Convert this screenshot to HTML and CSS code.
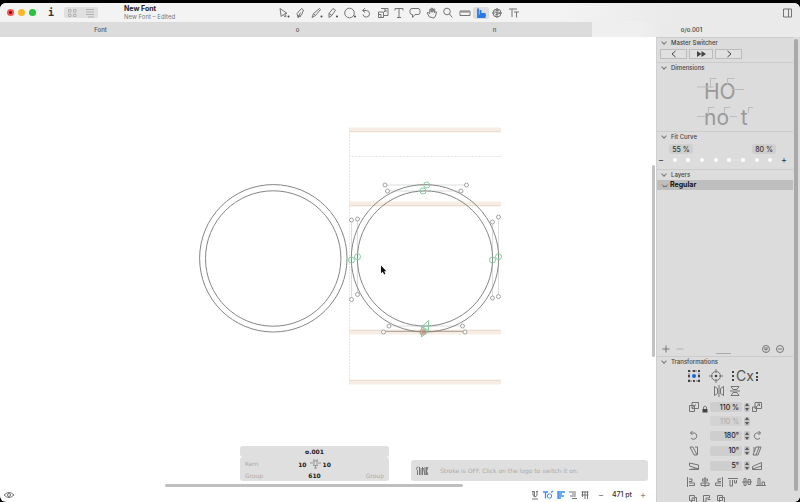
FILE: index.html
```html
<!DOCTYPE html>
<html lang="en">
<head>
<meta charset="utf-8">
<title>New Font</title>
<link rel="stylesheet" href="styles.css">
</head>
<body>
<div class="window">
  <header class="titlebar">
    <div class="lights"><i class="light close"></i><i class="light minimise"></i><i class="light full"></i></div>
    <button class="info" aria-label="Info">i</button>
    <div class="views">
      <button aria-label="Grid view"><svg width="12" height="10"><path d="M1.500 1.500h2.500v2.500h-2.500zM6.500 1.500h2.500v2.500h-2.500zM1.500 6h2.500v2.500h-2.500zM6.500 6h2.500v2.500h-2.500z"/></svg></button>
      <button aria-label="List view"><svg width="12" height="10"><path d="M2 1.500h8M2 4h8M2 6.500h8M4 9h6"/></svg></button>
    </div>
    <div class="title"><h1>New Font</h1><p>New Font – Edited</p></div>
    <nav class="tools" aria-label="Tools">
      <button aria-label="Select"><svg viewBox="0 0 14 12"><path d="M3 1.500l1.200 8 2-2 1.800 2.500 1.200-.8-1.700-2.400 2.500-.4z"/><circle class="dot" cx="11.500" cy="9.500" r="1"/></svg></button>
      <button aria-label="Draw"><svg viewBox="0 0 14 12"><path d="M5 10.500l-1-4 4.500-5 2 1.500-2 5zM5 10.500l2.500-5M4.500 8.500l3.500 1"/></svg></button>
      <button aria-label="Pencil"><svg viewBox="0 0 14 12"><path d="M2 10.500l1.500-4 6-5 1 1-5 6zM3.500 6.500l2 2"/><circle class="dot" cx="11.500" cy="9.500" r="1"/></svg></button>
      <button aria-label="Brush"><svg viewBox="0 0 14 12"><path d="M3 10.500v-4l4-5 2.500 1.800-3.500 5zM3 6.500l3 2"/><circle class="dot" cx="11" cy="9.500" r="1"/></svg></button>
      <button aria-label="Ellipse"><svg viewBox="0 0 14 12"><circle cx="6.500" cy="6" r="4.800"/><circle class="dot" cx="12" cy="9.500" r="1"/></svg></button>
      <button aria-label="Rotate"><svg viewBox="0 0 14 12"><path d="M4 3.500h3.500a3.300 3.300 0 1 1-3.500 4M6 1.200l-2.500 2.300 2.500 2"/></svg></button>
      <button aria-label="Scale"><svg viewBox="0 0 14 12"><path d="M5 1.500h7v7h-4M2.500 5h5v5.500h-5zM7 6l3-3M8 3h2v2M2.500 7.500h2.500v3"/></svg></button>
      <button aria-label="Text"><svg viewBox="0 0 14 12"><path d="M3 3.500v-2h8v2M7 1.500v9M5 10.500h4"/></svg></button>
      <button aria-label="Annotate"><svg viewBox="0 0 14 12"><path d="M4 1.500h6q2 0 2 2v2q0 2-2 2h-3l-2.500 3v-3q-2.500 0-2.500-2v-2q0-2 2-2z"/></svg></button>
      <button aria-label="Hand"><svg viewBox="0 0 14 12"><path d="M4.500 10l-2.500-4 1-.8 1.700 1.700v-4.500l1-.2.600 3v-4h1.200l.300 4 1-3.400 1 .4-.4 3.800 1.300-1.500.8.5-1 4-1.500 2z"/></svg></button>
      <button aria-label="Zoom"><svg viewBox="0 0 14 12"><circle cx="6" cy="4.500" r="3.300"/><path d="M8.300 6.800l3 3.700"/></svg></button>
      <button aria-label="Measure"><svg viewBox="0 0 14 12"><path d="M2 4h10v4.500h-10zM4 4v2M6 4v2M8 4v2M10 4v2"/></svg></button>
      <button class="on" aria-label="Fit curve"><svg viewBox="0 0 14 12"><path d="M4 1.500v8.500h7.500M6.500 3v4h5M5 8.500h7" stroke-width="1.800"/></svg></button>
      <button aria-label="Spacing"><svg viewBox="0 0 14 12"><circle cx="7" cy="6" r="4"/><path d="M9 4q-4-1.500-4 .5t4 1.500-4 2M7 1v10M2 6h3M9 6h3"/></svg></button>
      <button aria-label="Compare"><svg viewBox="0 0 14 12"><path d="M2 2h8M5 2v8M7 5h5M9.500 5v5.500"/></svg></button>
    </nav>
    <button class="panel-toggle" aria-label="Toggle sidebar"><svg width="12" height="12"><path d="M2.500 2h8v8h-8zM7.500 2v8"/></svg></button>
  </header>
  <nav class="tabs">
    <a href="#">Font</a><a href="#">o</a><a href="#">n</a><a href="#" class="active">o/o.001</a>
  </nav>
  <div class="body">
    <main class="editor">
      <div class="canvas">
        <svg class="drawing" aria-label="Glyph outlines"><g transform="translate(0 -37)">
          <g class="zones"><path d="M349 130h152M349 204h152M349 332h152M349 382h152"/></g>
          <path class="zone-line" d="M349 131.500h152M349 205.500h152M349 330.500h152M349 380.500h152"/>
          <path class="guide" d="M349.500 128v256M349 156.500h152"/>
          <path class="handle-line" d="M385 185h82M387 191h74M351.500 220v80M357.500 219v76M492.500 222v76M498.500 217v79M389 326h74"/>
          <path class="base" d="M383.500 331.500h82"/>
          <g class="outline">
            <circle cx="273.300" cy="258.300" r="73.700"/><circle cx="273.200" cy="258.500" r="67.700"/>
            <circle cx="425" cy="258.300" r="73.700"/><circle cx="425" cy="258.500" r="67.600"/>
          </g>
          <g class="handle">
            <circle cx="385" cy="185" r="2"/><circle cx="466.500" cy="185" r="2"/><circle cx="387.500" cy="191" r="2"/><circle cx="461" cy="191" r="2"/>
            <circle cx="351.500" cy="220" r="2"/><circle cx="357.500" cy="219" r="2"/><circle cx="492.500" cy="222" r="2"/><circle cx="498.500" cy="217" r="2"/>
            <circle cx="351.500" cy="299.500" r="2"/><circle cx="357.500" cy="294.500" r="2"/><circle cx="492.500" cy="298" r="2"/><circle cx="498.500" cy="296.500" r="2"/>
            <circle cx="389" cy="326" r="2"/><circle cx="462.500" cy="326" r="2"/><circle cx="383.500" cy="332" r="2"/><circle cx="465" cy="332" r="2"/>
          </g>
          <circle class="start" cx="423" cy="332" r="3.500"/>
          <g class="node">
            <circle cx="426.700" cy="185" r="3"/><circle cx="423" cy="191" r="3"/>
            <circle cx="351.500" cy="260" r="3"/><circle cx="357.500" cy="256.700" r="3"/>
            <circle cx="492.500" cy="260" r="3"/><circle cx="498.500" cy="256.700" r="3"/>
            <path d="M428.500 320.500v10l-6.500-4zM421.500 326.500l6 5.500-6 5z"/>
          </g>
          <path class="cursor" d="M381 265.500v7.800l1.800-1.500 1.300 2.700 1.300-.7-1.300-2.600h2.300z"/>
        </g></svg>
        <section class="metrics">
          <div class="name">o.001</div>
          <div class="pairs">
            <span>Kern</span>
            <b class="bearings">10 <svg width="12" height="12"><path d="M5 1v6M8 1v6M1 5h3M9 5h3M4 7.500h5M6.500 7.500v3M5 10h3M4 3h5"/></svg> 10</b>
            <span></span>
            <span>Group</span><b>610</b><span class="right">Group</span>
          </div>
        </section>
        <section class="notice">
          <svg width="14" height="10"><path d="M3.500 1q-2 0-2 1.500t1 2v4.500M4.500 1v8M6 2v7M7.500 1v8M8.500 2l1.500 7v-8M11.500 1v8M13 1l-1.500 4 1.500 4"/></svg>
          <span>Stroke is OFF. Click on the logo to switch it on.</span>
        </section>
        <i class="vscroll"></i><i class="hscroll"></i>
      </div>
      <footer class="status">
        <button aria-label="Preview"><svg width="12" height="8"><path d="M1 4q5-5 10 0q-5 5-10 0z"/><circle cx="6" cy="4" r="1.500"/></svg></button>
        <div class="status-tools">
          <button aria-label="Underline"><svg width="10" height="10"><path d="M2 1.500h2.500M6 1.500h2M3 1.500v4q2 3 4 0v-4M2 9h6M4.500 1.500v5"/></svg></button>
          <button class="blue" aria-label="Kerning"><svg width="12" height="10"><path d="M1 2h5M3.500 2v6.500M9 2.500l2-1.500" stroke-width="1.300"/><circle cx="7.500" cy="6" r="2.200"/></svg></button>
          <button class="blue" aria-label="Align left"><svg width="10" height="10"><path d="M2 1v8M2 2h7M2 4h4M2 6h6M2 8h3" stroke-width="1.300"/></svg></button>
          <button aria-label="Align right"><svg width="10" height="10"><path d="M1 2h7M4 4h4M2 6h6M4 8.500h5"/></svg></button>
          <button aria-label="Vertical"><svg width="10" height="10"><path d="M2.500 1v6M5 1v8M7.500 1v8M1.500 2h7M1.500 5h7"/></svg></button>
        </div>
        <div class="zoom"><button aria-label="Zoom out">−</button><span>471 pt</span><button aria-label="Zoom in">+</button></div>
      </footer>
    </main>
    <aside class="sidebar">
      <div class="panels">
        <section class="master">
          <h2>Master Switcher</h2>
          <div class="switcher">
            <button aria-label="Previous"><svg width="8" height="8"><path d="M5.500 1l-3.500 3 3.500 3"/></svg></button>
            <button aria-label="Play"><svg width="11" height="8"><path class="solid" d="M1 1l4.500 3-4.500 3zM5.500 1l4.500 3-4.500 3z"/></svg></button>
            <button aria-label="Next"><svg width="8" height="8"><path d="M2.500 1l3.500 3-3.500 3"/></svg></button>
          </div>
        </section>
        <section class="dims">
          <h2>Dimensions</h2>
          <div class="specimen">
            <div>HO</div><div>no&nbsp;&nbsp;t</div>
            <svg class="ticks" viewBox="0 0 56 56"><path d="M0 14h17M13.500 5v10M13.500 5.500h6M30.500 5v7M30.500 5.500h7M35 16.500h12M0 43.500h9M11.500 34v6M11.500 34.500h6M27.500 34v6M27.500 34.500h6M33 43.500h7M51.500 34v6M51.500 34.500h5"/></svg>
          </div>
        </section>
        <section class="fit">
          <h2>Fit Curve</h2>
          <div class="range"><input aria-label="Minimum" value="55 %"><input aria-label="Maximum" value="80 %"></div>
          <div class="dots"><b>−</b><i></i><i></i><i></i><i></i><i></i><i></i><i></i><i></i><b>+</b></div>
        </section>
        <section class="layers">
          <h2>Layers</h2>
          <div class="layer"><svg width="8" height="6"><path d="M1 2.500q3 4 6 0M2 4.500h4"/></svg>Regular</div>
          <div class="layer-tools">
            <button aria-label="Add layer"><svg width="10" height="10"><path d="M1.500 5h7M5 1.500v7"/></svg></button>
            <button class="faint" aria-label="Remove layer"><svg width="10" height="10"><path d="M1.500 5h7"/></svg></button>
            <i class="grip"></i>
            <button aria-label="Filter"><svg width="10" height="10"><circle cx="5" cy="5" r="3.500"/><path d="M3 4h4M3.500 5.500h3M4.500 7h1"/></svg></button>
            <button aria-label="More"><svg width="10" height="10"><circle cx="5" cy="5" r="3.500"/><path d="M3 5h4"/></svg></button>
          </div>
        </section>
        <section class="transform">
          <h2>Transformations</h2>
          <div class="origin">
            <button aria-label="Origin"><svg width="14" height="14"><path d="M2 2h10v10h-10z" stroke-dasharray="2 1"/><path class="solid" d="M1 1h2v2h-2zM6 1h2v2h-2zM11 1h2v2h-2zM1 6h2v2h-2zM11 6h2v2h-2zM1 11h2v2h-2zM6 11h2v2h-2zM11 11h2v2h-2z"/><circle class="centre" cx="7" cy="7" r="2"/></svg></button>
            <button aria-label="Target"><svg width="14" height="14"><circle cx="7" cy="7" r="4.500"/><circle class="solid" cx="7" cy="7" r="1.300"/><path d="M7 0v4M7 10v4M0 7h4M10 7h4"/></svg></button>
            <button class="metric" aria-label="Metrics reference"><svg width="4" height="14"><path class="solid" d="M1 2h2v2h-2zM1 6h2v2h-2zM1 10h2v2h-2z"/></svg><span>Cx</span><svg width="4" height="14"><path class="solid" d="M1 3h2v2h-2zM1 7h2v2h-2zM1 10h2v2h-2z"/></svg></button>
          </div>
          <div class="flips">
            <button aria-label="Flip horizontally"><svg width="12" height="12"><path d="M1.500 1.500l3 2v5l-3 2zM10.500 1.500l-3 2v5l3 2zM6 0v12"/></svg></button>
            <button aria-label="Flip vertically"><svg width="12" height="12"><path d="M2 1.500h8l-2 3h-4zM2 10.500h8l-2-3h-4zM1 6h10"/></svg></button>
          </div>
          <div class="fields">
            <button aria-label="Scale down"><svg width="12" height="12"><path d="M4 1.500h6.500v6h-6.500zM1.500 4.500h5v6h-5zM4 7l4-3.500"/></svg></button><svg class="lock" width="8" height="10"><path d="M2.500 5v-2q1.500-2 3 0v2"/><path class="solid" d="M1.500 5h5v3.500h-5z"/></svg><input aria-label="Scale" value="110 %"><button class="step" aria-label="Step scale"></button><button aria-label="Scale up"><svg width="12" height="12"><path d="M4 1.500h6.500v6h-6.500zM1.500 6h4v4.500h-4zM5 6l3.500-3M6.500 3h2v2"/></svg></button>
            <input class="off" aria-label="Scale vertically" value="110 %"><button class="step" aria-label="Step vertical scale"></button>
            <button class="first" aria-label="Rotate left"><svg width="12" height="12"><path d="M2.500 3h4a3.200 3.200 0 1 1-3.500 5M4.500 1l-2 2 2 2"/></svg></button><input aria-label="Rotation" value="180°"><button class="step" aria-label="Step rotation"></button><button aria-label="Rotate right"><svg width="12" height="12"><path d="M9.500 3h-4a3.200 3.200 0 1 0 3.500 5M7.500 1l2 2-2 2"/></svg></button>
            <button class="first" aria-label="Slant left"><svg width="12" height="12"><path d="M2 2h3l4 8h-3zM9.500 2v8M7 2h2.500"/></svg></button><input aria-label="Slant" value="10°"><button class="step" aria-label="Step slant"></button><button aria-label="Slant right"><svg width="12" height="12"><path d="M5 2h5l-3 8h-5zM3 2v5M5 10l3-8"/></svg></button>
            <button class="first" aria-label="Skew down"><svg width="12" height="12"><path d="M1.500 3l9 2v4.500h-9l9-1M1.500 3v3l9 3"/></svg></button><input aria-label="Skew" value="5°"><button class="step" aria-label="Step skew"></button><button aria-label="Skew up"><svg width="12" height="12"><path d="M10.500 2.500l-9 4v3h9zM1.500 9l9-3"/></svg></button>
          </div>
          <div class="align">
            <button aria-label="Align left"><svg width="10" height="10"><path d="M1.500 0v10M3 2h3v2.500h-3M3 6h5.500v2.500h-5.500"/></svg></button>
            <button aria-label="Align centre"><svg width="10" height="10"><path d="M5 0v10M2.500 2h5v2h-5zM1 6h8v2.500h-8z"/></svg></button>
            <button aria-label="Align right"><svg width="10" height="10"><path d="M8.500 0v10M7 2h-3v2.500h3M7 6h-5.500v2.500h5.500"/></svg></button>
            <button aria-label="Align top"><svg width="10" height="10"><path d="M0 1.500h10M2 3v6h2.500v-6M6.500 3v3h2v-3"/></svg></button>
            <button aria-label="Align middle"><svg width="10" height="10"><path d="M0 5h10M2 1.500h2v7h-2zM6 2.500h2.500v5h-2.500z"/></svg></button>
            <button aria-label="Align bottom"><svg width="10" height="10"><path d="M0 8.500h10M2 8v-6.500h2v6.500M6 8v-3h2.500v3"/></svg></button>
          </div>
          <div class="paths">
            <button aria-label="Union"><svg width="10" height="10"><path d="M1.500 1.500h5v2h2v5h-5v-2h-2zM4 4h2.500v2.500h-2.500z"/></svg></button>
            <button aria-label="Subtract"><svg width="10" height="10"><path d="M1.500 1.500h6v2.500h-3.500v4h-2.500zM5.500 5.500h3"/></svg></button>
            <button aria-label="Intersect"><svg width="10" height="10"><path d="M1.500 1.500h5v5h-5zM3.500 3.500h5v5h-5z"/></svg></button>
          </div>
        </section>
      </div>
      <i class="side-scroll"></i>
    </aside>
  </div>
</div>
</body>
</html>
```
FILE: styles.css
```css
* { box-sizing: border-box; margin: 0; padding: 0; }
body { background: #000; font: 6px/8px Inter, "Liberation Sans", sans-serif; color: #333; }
button, input { border: 0; background: none; font: inherit; color: inherit; }
button { display: flex; align-items: center; justify-content: center; }
svg { display: block; flex: none; fill: none; stroke: #757575; stroke-width: 1; }
svg .solid, svg .dot { fill: #444; stroke: none; }
a { color: inherit; text-decoration: none; }

.window { display: flex; flex-direction: column; height: calc(100vh - 3px); margin-top: 3px; background: #fff; border-radius: 6px; overflow: hidden; }

.titlebar { display: flex; align-items: center; flex: none; height: 19px; padding: 0 7px; background: linear-gradient(90deg, #f3f3f3 70%, #eaeaea 84%); }
.lights { display: flex; gap: 4px; width: 39px; }
.light { width: 7px; height: 7px; border-radius: 50%; }
.close { background: radial-gradient(circle, #7b1010 1px, #fb504b 2px); }
.minimise { background: #fcb827; }
.full { background: #25c43c; }
.info { width: 10px; font: bold 10px/12px "DejaVu Sans Mono", monospace; }
.views { display: flex; justify-content: space-around; width: 34px; height: 11px; margin-left: 8px; background: #e0e0e0; border-radius: 2px; }
.views svg { stroke: #b2b2b2; }
.title { width: 152px; margin-left: 26px; }
.title h1 { font-size: 7px; line-height: 8px; color: #222; }
.title p { font-size: 6px; line-height: 7px; color: #777; }
.tools { display: flex; justify-content: space-between; width: 246px; }
.tools button { width: 16px; height: 12px; border-radius: 2px; }
.tools svg { width: 14px; height: 12px; }
.tools .on { background: #dedede; }
.tools .on svg { stroke: #2878e8; }
.panel-toggle { margin-left: auto; }

.tabs { display: grid; grid-template-columns: repeat(4, 1fr); flex: none; height: 15px; padding: 0 10px 0 2px; background: linear-gradient(90deg, #dcdcdc 74%, #efefef 74%, #efefef 80%, #eaeaea 83%); font-weight: 500; line-height: 15px; text-align: center; color: #555; }
.tabs .active { color: #333; }

.body { display: flex; flex: 1; min-height: 0; }
.editor { display: flex; flex: 1; flex-direction: column; min-width: 0; }
.canvas { position: relative; flex: 1; overflow: hidden; }
.drawing { position: absolute; width: 100%; height: 100%; }
.zones { stroke: #f6ede5; stroke-width: 5; }
.zone-line { stroke: #ebdccf; }
.guide { stroke: #e6e6e6; stroke-dasharray: 2 1; }
.handle-line { stroke: #dadfdc; }
.base { stroke: #b5a89c; }
.outline { stroke: #858585; }
.handle { fill: #fff; stroke: #a2a2a2; }
.node { stroke: #84cda2; }
.start { fill: #b38469; stroke: none; opacity: .6; }
.cursor { fill: #111; stroke: none; }

.metrics { position: absolute; bottom: 7px; left: 240px; width: 149px; color: #222; font-family: "DejaVu Sans", sans-serif; }
.metrics > div { background: #dfdfdf; border-radius: 3px; }
.name { padding: 2px 0 1px; font-weight: bold; text-align: center; }
.pairs { display: grid; grid-template-columns: 1fr auto 1fr; padding: 1px 5px 0; line-height: 11px; text-align: center; }
.pairs span { color: #aaa; text-align: left; }
.pairs .right { text-align: right; }
.bearings { display: flex; align-items: center; gap: 2px; }
.bearings svg { stroke: #999; }
.notice { position: absolute; bottom: 7px; left: 411px; right: 8px; display: flex; align-items: center; gap: 11px; height: 21px; padding-left: 4px; background: #dfdfdf; border-radius: 3px; color: #aaa; font-family: "DejaVu Sans", sans-serif; }
.vscroll { position: absolute; right: 1px; top: 128px; width: 3px; height: 192px; background: #c2c2c2; border-radius: 2px; }
.hscroll { position: absolute; left: 165px; bottom: 1px; width: 298px; height: 3px; background: #bfbfbf; border-radius: 2px; }

.status { display: flex; align-items: center; flex: none; height: 14px; padding: 0 10px 0 3px; }
.status-tools { display: flex; gap: 2px; margin-left: auto; }
.blue svg { stroke: #3b8df0; }
.zoom { display: flex; align-items: center; gap: 8px; margin-left: 8px; font-size: 7px; font-weight: 500; }
.zoom button { font-size: 9px; color: #888; }

.sidebar { display: flex; width: 144px; background: #dcdcdc; border-left: 1px solid #cfcfcf; border-bottom-right-radius: 6px; }
.panels { display: flex; flex: 1; flex-direction: column; min-width: 0; overflow: hidden; }
.side-scroll { width: 4px; margin: 2px 2px 11px 1px; background: #a9a9a9; border-radius: 2px; }
.panels section { border-top: 1px solid #cbcbcb; }
h2 { position: relative; height: 10px; padding-left: 14px; font-size: 6px; font-weight: 500; line-height: 10px; color: #444; }
h2::before { content: ""; position: absolute; left: 5px; top: 2px; width: 3px; height: 3px; border: solid #777; border-width: 0 1px 1px 0; transform: rotate(45deg); }
.switcher { display: flex; gap: 2px; padding: 1px 0 3px 3px; }
.switcher button { width: 27px; height: 10px; border: 1px solid #bcbcbc; background: #e0e0e0; }
.switcher button:nth-child(2) { width: 24px; }
.switcher svg { stroke: #444; }
.specimen { position: relative; padding: 6px 0 0 47px; font: 21px/26px Inter, sans-serif; color: #999; }
.ticks { position: absolute; left: 40px; top: 0; width: 56px; height: 56px; stroke: #bbb; }
.range { display: flex; justify-content: space-between; padding: 2px 17px 0 12px; }
.range input { width: 24px; height: 10px; background: #cfcfcf; border-radius: 3px; font-size: 7px; font-weight: 500; text-align: center; }
.dots { display: flex; align-items: center; justify-content: space-between; height: 12px; padding: 0 7px 0 2px; }
.dots i { width: 4px; height: 4px; border-radius: 50%; background: #fff; }
.dots b { display: flex; justify-content: center; width: 4px; font-size: 9px; font-weight: 400; }
.fit { padding-bottom: 3px; }
.layers { display: flex; flex: 1; flex-direction: column; min-height: 0; }
.layer { display: flex; align-items: center; gap: 1px; height: 10px; padding-left: 4px; background: #bebebe; color: #111; font-size: 7px; font-weight: 700; }
.layer-tools { display: flex; align-items: center; gap: 4px; height: 14px; margin-top: auto; padding: 0 8px 0 4px; }
.layer-tools .faint { opacity: .4; }
.grip { width: 15px; height: 1px; margin: 8px auto 0; background: #aaa; }

.transform { flex: none; }
.origin { display: flex; align-items: center; gap: 8px; height: 17px; padding: 1px 0 0 30px; }
.origin .centre { fill: #1463f0; stroke: none; }
.metric { gap: 1px; font-size: 14px; line-height: 14px; color: #555; }
.flips { display: flex; align-items: center; gap: 4px; height: 14px; padding-left: 56px; }
.fields { display: grid; grid-template-columns: 12px 8px 32px 7px 12px; grid-template-rows: 14px 14px 15px 15px 15px; column-gap: 1px; align-items: center; padding: 2px 0 0 31px; }
.fields input { grid-column: 3; width: 100%; height: 10px; padding-right: 3px; background: #cecece; border-radius: 2px; color: #222; font-size: 7px; font-weight: 500; text-align: right; }
.fields .off { color: #aaa; font-weight: 400; background: #d3d3d3; }
.fields .first { grid-column: 1; }
.lock { align-self: end; }
.lock, .fields .step { justify-self: center; }
.fields .step { flex-direction: column; gap: 2px; width: 6px; height: 9px; border-radius: 2px; background: #c4c4c4; }
.step::before, .step::after { content: ""; border: 2px solid transparent; border-top: 0; border-bottom: 3px solid #555; }
.step::after { transform: rotate(180deg); }
.align { display: flex; align-items: center; gap: 4px; height: 18px; padding-left: 29px; }
.paths { display: flex; gap: 4px; height: 11px; padding: 3px 0 0 31px; align-items: flex-start; }
```
